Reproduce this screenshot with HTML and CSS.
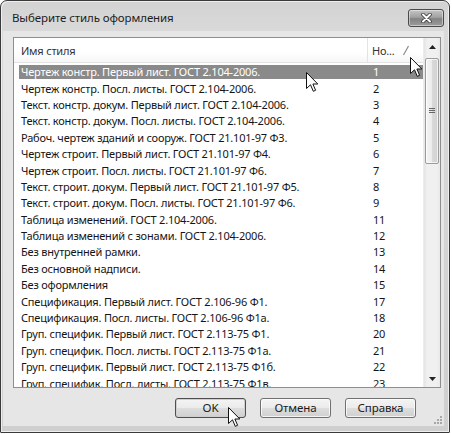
FILE: index.html
```html
<!DOCTYPE html>
<html lang="ru">
<head>
<meta charset="utf-8">
<title>Выберите стиль оформления</title>
<link rel="stylesheet" href="styles.css">
</head>
<body>
<div class="window">
  <div class="titlebar">
    <span class="title">Выберите стиль оформления</span>
    <button class="close" aria-label="Закрыть">
      <svg width="15" height="10" viewBox="0 0 15 10"><path d="M4 1.5 L11 8.5 M11 1.5 L4 8.5" stroke="#3a3a3a" stroke-width="3.6" stroke-linecap="round"/><path d="M4 1.5 L11 8.5 M11 1.5 L4 8.5" stroke="#fff" stroke-width="2" stroke-linecap="round"/></svg>
    </button>
  </div>
  <div class="client">
    <div class="listbox">
      <div class="listarea">
        <div class="header">
          <div class="hcol hname">Имя стиля</div>
          <div class="hcol hnum">Но...
            <svg class="sortmark" width="8" height="11" viewBox="0 0 8 11"><path d="M1.5 10 L6.5 1" stroke="#8a8a8a" stroke-width="1.2"/></svg>
          </div>
        </div>
        <div class="rows">
          <div class="row sel"><span class="name">Чертеж констр. Первый лист. ГОСТ 2.104-2006.</span><span class="num">1</span></div>
          <div class="row"><span class="name">Чертеж констр. Посл. листы. ГОСТ 2.104-2006.</span><span class="num">2</span></div>
          <div class="row"><span class="name">Текст. констр. докум. Первый лист. ГОСТ 2.104-2006.</span><span class="num">3</span></div>
          <div class="row"><span class="name">Текст. констр. докум. Посл. листы. ГОСТ 2.104-2006.</span><span class="num">4</span></div>
          <div class="row"><span class="name">Рабоч. чертеж зданий и сооруж. ГОСТ 21.101-97 Ф3.</span><span class="num">5</span></div>
          <div class="row"><span class="name">Чертеж строит. Первый лист. ГОСТ 21.101-97 Ф4.</span><span class="num">6</span></div>
          <div class="row"><span class="name">Чертеж строит. Посл. листы. ГОСТ 21.101-97 Ф6.</span><span class="num">7</span></div>
          <div class="row"><span class="name">Текст. строит. докум. Первый лист. ГОСТ 21.101-97 Ф5.</span><span class="num">8</span></div>
          <div class="row"><span class="name">Текст. строит. докум. Посл. листы. ГОСТ 21.101-97 Ф6.</span><span class="num">9</span></div>
          <div class="row"><span class="name">Таблица изменений. ГОСТ 2.104-2006.</span><span class="num">11</span></div>
          <div class="row"><span class="name">Таблица изменений с зонами. ГОСТ 2.104-2006.</span><span class="num">12</span></div>
          <div class="row"><span class="name">Без внутренней рамки.</span><span class="num">13</span></div>
          <div class="row"><span class="name">Без основной надписи.</span><span class="num">14</span></div>
          <div class="row"><span class="name">Без оформления</span><span class="num">15</span></div>
          <div class="row"><span class="name">Спецификация. Первый лист. ГОСТ 2.106-96 Ф1.</span><span class="num">17</span></div>
          <div class="row"><span class="name">Спецификация. Посл. листы. ГОСТ 2.106-96 Ф1а.</span><span class="num">18</span></div>
          <div class="row"><span class="name">Груп. специфик. Первый лист. ГОСТ 2.113-75 Ф1.</span><span class="num">20</span></div>
          <div class="row"><span class="name">Груп. специфик. Посл. листы. ГОСТ 2.113-75 Ф1а.</span><span class="num">21</span></div>
          <div class="row"><span class="name">Груп. специфик. Первый лист. ГОСТ 2.113-75 Ф1б.</span><span class="num">22</span></div>
          <div class="row"><span class="name">Груп. специфик. Посл. листы. ГОСТ 2.113-75 Ф1в.</span><span class="num">23</span></div>
        </div>
      </div>
      <div class="scrollbar">
        <div class="sbtn"><svg width="7" height="4" viewBox="0 0 7 4"><path d="M0 4 L3.5 0 L7 4 Z" fill="#222"/></svg></div>
        <div class="track">
          <div class="thumb"><span class="grip"></span></div>
        </div>
        <div class="sbtn"><svg width="7" height="4" viewBox="0 0 7 4"><path d="M0 0 L7 0 L3.5 4 Z" fill="#222"/></svg></div>
      </div>
    </div>
    <div class="buttons">
      <button class="btn default">OK</button>
      <button class="btn">Отмена</button>
      <button class="btn">Справка</button>
    </div>
    <svg class="sizegrip" width="9" height="9" viewBox="0 0 9 9">
      <g fill="#a8a8a8"><rect x="7" y="1" width="2" height="2"/><rect x="4" y="4" width="2" height="2"/><rect x="7" y="4" width="2" height="2"/><rect x="1" y="7" width="2" height="2"/><rect x="4" y="7" width="2" height="2"/><rect x="7" y="7" width="2" height="2"/></g>
    </svg>
  </div>

  <svg class="cursor c1" width="13" height="21" viewBox="0 0 13 21"><path d="M0.5 0.5 L0.5 16.5 L4.5 12.8 L7.3 19.3 L9.6 18.3 L6.9 12 L11.8 12 Z" fill="#fff" stroke="#111" stroke-width="1" stroke-linejoin="miter"/></svg>
  <svg class="cursor c2" width="13" height="21" viewBox="0 0 13 21"><path d="M0.5 0.5 L0.5 16.5 L4.5 12.8 L7.3 19.3 L9.6 18.3 L6.9 12 L11.8 12 Z" fill="#fff" stroke="#111" stroke-width="1" stroke-linejoin="miter"/></svg>
  <svg class="cursor c3" width="13" height="21" viewBox="0 0 13 21"><path d="M0.5 0.5 L0.5 16.5 L4.5 12.8 L7.3 19.3 L9.6 18.3 L6.9 12 L11.8 12 Z" fill="#fff" stroke="#111" stroke-width="1" stroke-linejoin="miter"/></svg>
</div>
</body>
</html>
```
FILE: styles.css
```css
* { box-sizing: border-box; }

html, body {
  margin: 0;
  padding: 0;
  background: #ffffff;
}

body {
  font-family: "Noto Sans", "Open Sans", "DejaVu Sans", sans-serif;
  font-size: 11px;
  letter-spacing: -0.2px;
  color: #151515;
}

.window {
  position: relative;
  width: 450px;
  height: 433px;
  border: 1px solid #3a3a3a;
  border-radius: 7px 7px 1px 1px;
  background: linear-gradient(180deg, #d3d3d3 0, #d9d9d9 30px, #cfcfcf 100%);
  box-shadow: inset 1px 1px 0 #efefef, inset -1px -1px 0 #efefef;
  display: flex;
  flex-direction: column;
  overflow: hidden;
}

.titlebar {
  height: 30px;
  flex: none;
  display: flex;
  align-items: flex-start;
  justify-content: space-between;
  padding: 0 5px 0 11px;
}

.title {
  margin-top: 9px;
  font-size: 11.5px;
  letter-spacing: -0.1px;
  color: #1e1e1e;
  line-height: 16px;
}

.close {
  margin-top: 8px;
  width: 36px;
  height: 18px;
  padding: 0;
  border: 1px solid #4a4a4a;
  border-radius: 3px;
  background: linear-gradient(180deg, #c4c4c4 0, #a2a2a2 45%, #838383 55%, #9c9c9c 100%);
  box-shadow: inset 0 0 0 1px rgba(255,255,255,0.45);
  display: flex;
  align-items: center;
  justify-content: center;
}

.close svg { display: block; }

.client {
  position: relative;
  flex: 1;
  margin: 0 5px 6px 2px;
  background: #e6e6e6;
  padding: 6px 3px 0 10px;
  display: flex;
  flex-direction: column;
}

.listbox {
  height: 351px;
  border: 1px solid #8e8e8e;
  background: #ffffff;
  display: flex;
}

.listarea {
  flex: 1;
  min-width: 0;
  overflow: hidden;
}

.header {
  height: 25px;
  display: flex;
  border-bottom: 1px solid #e3e3e3;
  background: linear-gradient(180deg, #ffffff 0, #ffffff 60%, #f6f6f6 100%);
  color: #333;
}

.hcol {
  display: flex;
  align-items: center;
}

.hname {
  width: 354px;
  padding-left: 7px;
  border-right: 1px solid #e3e3e3;
}

.hnum {
  flex: 1;
  padding-left: 4px;
  position: relative;
}

.sortmark {
  position: absolute;
  left: 34px;
  top: 7px;
}

.rows {
  padding-top: 0.5px;
}

.row {
  height: 16.4px;
  margin-left: 5px;
  display: flex;
  align-items: center;
  white-space: nowrap;
}

.row .name {
  width: 349px;
  padding-left: 2px;
  overflow: hidden;
}

.row .num {
  padding-left: 5px;
}

.row.sel {
  background: linear-gradient(180deg, transparent 0, transparent 1px, #8a8a8a 1px, #8a8a8a calc(100% - 1px), transparent calc(100% - 1px));
  color: #ffffff;
}

.scrollbar {
  width: 17px;
  flex: none;
  display: flex;
  flex-direction: column;
  background: linear-gradient(90deg, #e4e4e4 0, #f0f0f0 20%, #f0f0f0 80%, #e9e9e9 100%);
  border-left: 1px solid #ececec;
}

.sbtn {
  height: 17px;
  flex: none;
  display: flex;
  align-items: center;
  justify-content: center;
}

.sbtn svg { display: block; }

.track {
  flex: 1;
  padding: 3px 1px 0 1px;
}

.thumb {
  height: 106px;
  border: 1px solid #9c9c9c;
  border-radius: 2px;
  background: linear-gradient(90deg, #f4f4f4 0, #ebebeb 50%, #d9d9d9 51%, #d2d2d2 100%);
  box-shadow: inset 0 0 0 1px rgba(255,255,255,0.7);
  display: flex;
  align-items: center;
  justify-content: center;
}

.grip {
  width: 6px;
  height: 6px;
  background: repeating-linear-gradient(180deg, #666 0, #666 1px, transparent 1px, transparent 2px);
}

.buttons {
  margin-top: 10px;
  display: flex;
  justify-content: flex-end;
  gap: 14px;
  padding-right: 25px;
}

.btn {
  width: 71px;
  height: 20px;
  padding: 0;
  border: 1px solid #707070;
  border-radius: 3px;
  background: linear-gradient(180deg, #f4f4f4 0, #ebebeb 48%, #dddddd 52%, #d0d0d0 100%);
  box-shadow: inset 0 0 0 1px rgba(255,255,255,0.75);
  font-family: "Noto Sans", "Open Sans", "DejaVu Sans", sans-serif;
  font-size: 11.5px;
  letter-spacing: -0.1px;
  color: #1a1a1a;
  line-height: 16px;
}

.btn.default {
  border-color: #4e4e4e;
  box-shadow: inset 0 0 0 1px #cfcfcf;
}

.sizegrip {
  position: absolute;
  right: 2px;
  bottom: 2px;
}

.cursor {
  position: absolute;
  display: block;
}

.c1 { left: 305px; top: 71px; }
.c2 { left: 409px; top: 56px; }
.c3 { left: 227px; top: 406px; }
```
